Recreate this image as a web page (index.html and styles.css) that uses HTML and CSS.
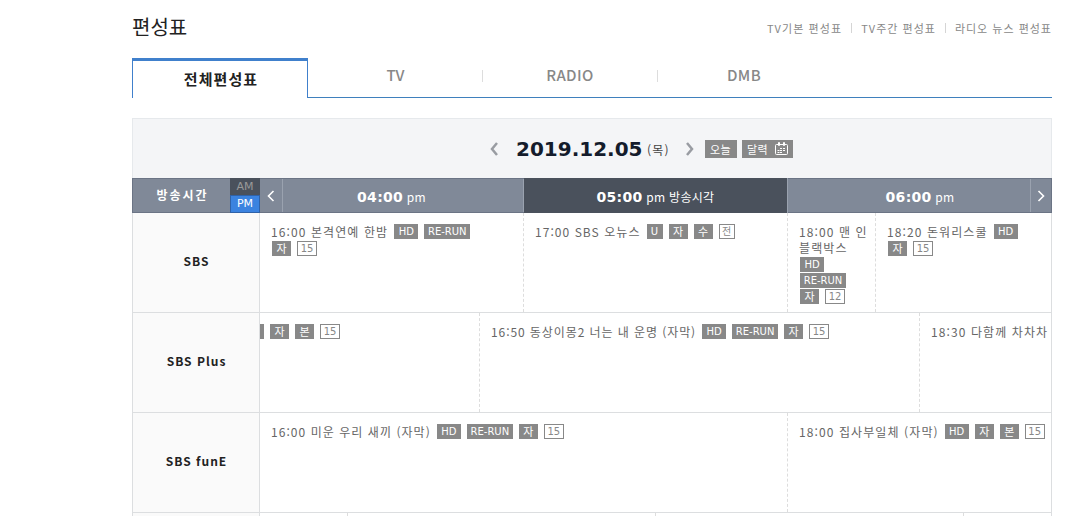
FILE: index.html
```html
<!DOCTYPE html>
<html lang="ko">

<head>
    <meta charset="UTF-8">
    <meta name="viewport" content="width=device-width, initial-scale=1.0">
    <title>편성표</title>
    <link rel="stylesheet" href="styles.css">
</head>

<body>
    <div id="container">
        <div class="head">
            <h2>편성표</h2>
            <ul class="link">
                <li><a>TV기본 편성표</a></li>
                <li><a>TV주간 편성표</a></li>
                <li><a>라디오 뉴스 편성표</a></li>
            </ul>
        </div>

        <ul class="tab">
            <li class="on">전체편성표</li>
            <li>TV</li>
            <li>RADIO</li>
            <li>DMB</li>
        </ul>

        <div class="day">
            <svg class="prev" width="8" height="14" viewBox="0 0 8 14"><path d="M7 1L2 7l5 6" /></svg>
            <strong>2019.12.05</strong>
            <span class="week">(목)</span>
            <svg class="next" width="8" height="14" viewBox="0 0 8 14"><path d="M1 1l5 6-5 6" /></svg>
            <a class="btn today">오늘</a>
            <a class="btn cal">달력
                <svg width="13" height="13" viewBox="0 0 13 13">
                    <path d="M3 2.5H1.5a1 1 0 0 0-1 1v8a1 1 0 0 0 1 1h10a1 1 0 0 0 1-1v-8a1 1 0 0 0-1-1H10M5 2.5h3M3.5 .5h1v3h-1zM8.5 .5h1v3h-1z" />
                    <path d="M5 6.5h2M8 6.5h2M2.5 8.5h2M5 8.5h2M8 8.5h2M2.5 10.5h2M5 10.5h2" />
                </svg>
            </a>
        </div>

        <div class="time">
            <div class="label">방송시간</div>
            <div class="ampm"><span>AM</span><span class="on">PM</span></div>
            <div class="arrow"><svg width="8" height="12" viewBox="0 0 8 12"><path d="M6.5 1L1.5 6l5 5" /></svg></div>
            <div class="hour first"><b>04:00</b> pm</div>
            <div class="hour now"><b>05:00</b> pm 방송시각</div>
            <div class="hour last"><b>06:00</b> pm</div>
            <div class="arrow right"><svg width="8" height="12" viewBox="0 0 8 12"><path d="M1.5 1l5 5-5 5" /></svg></div>
        </div>

        <div class="row">
            <div class="name">SBS</div>
            <div class="list">
                <div class="item m60">
                    <div class="line"><span>16:00 본격연예 한밤</span><i class="hd">HD</i><i class="re">RE-RUN</i></div>
                    <div class="line tags"><i>자</i><i class="age">15</i></div>
                </div>
                <div class="item m60">
                    <div class="line"><span class="mid">17:00 SBS 오뉴스</span><i class="u">U</i><i>자</i><i>수</i><i class="age all">전</i></div>
                </div>
                <div class="item m20">
                    <div class="line two"><span>18:00 맨 인<br>블랙박스</span></div>
                    <div class="line tags"><i class="hd">HD</i></div>
                    <div class="line"><i class="re">RE-RUN</i></div>
                    <div class="line"><i>자</i><i class="age">12</i></div>
                </div>
                <div class="item m40">
                    <div class="line"><span>18:20 돈워리스쿨</span><i class="hd">HD</i></div>
                    <div class="line tags"><i>자</i><i class="age">15</i></div>
                </div>
            </div>
        </div>

        <div class="row">
            <div class="name">SBS Plus</div>
            <div class="list">
                <div class="item m50 cut">
                    <div class="line"><i class="re"></i><i>자</i><i>본</i><i class="age">15</i></div>
                </div>
                <div class="item m100">
                    <div class="line"><span class="tight">16:50 동상이몽2 너는 내 운명 (자막)</span><i class="hd">HD</i><i class="re">RE-RUN</i><i>자</i><i class="age">15</i></div>
                </div>
                <div class="item m60">
                    <div class="line"><span>18:30 다함께 차차차</span></div>
                </div>
            </div>
        </div>

        <div class="row">
            <div class="name">SBS funE</div>
            <div class="list">
                <div class="item m120">
                    <div class="line"><span class="mid">16:00 미운 우리 새끼 (자막)</span><i class="hd">HD</i><i class="re">RE-RUN</i><i>자</i><i class="age">15</i></div>
                </div>
                <div class="item m60">
                    <div class="line"><span>18:00 집사부일체 (자막)</span><i class="hd">HD</i><i>자</i><i>본</i><i class="age">15</i></div>
                </div>
            </div>
        </div>

        <div class="row end">
            <div class="name"></div>
            <div class="list">
                <div class="item m20"></div>
                <div class="item m70"></div>
                <div class="item m70"></div>
                <div class="item m60"></div>
            </div>
        </div>
    </div>
</body>

</html>
```

FILE: styles.css
```css
* {
    margin: 0;
    padding: 0;
    box-sizing: border-box;
}

body {
    background: #fff;
    color: #666;
    font: 12px/16px "Noto Sans CJK KR", sans-serif;
}

ul {
    list-style: none;
}

i {
    font-style: normal;
}

svg {
    fill: none;
    stroke: #fff;
    flex: none;
}

#container {
    width: 920px;
    margin-left: 132px;
}

.head {
    display: flex;
    justify-content: space-between;
    height: 58px;
    padding-top: 13px;
}

.head h2 {
    color: #222;
    font-size: 20px;
    font-weight: 400;
    line-height: 28px;
}

.link {
    display: flex;
    padding-top: 6px;
    color: #888;
    font-size: 11px;
    letter-spacing: 1px;
}

.link li {
    display: flex;
    align-items: center;
    height: 17px;
}

.link li + li::before {
    content: "";
    width: 1px;
    height: 10px;
    margin: 0 9px;
    background: #d5d5d5;
}

.link li:first-child {
    letter-spacing: 1.1px;
}

/* tab */
.tab {
    display: flex;
    height: 40px;
    color: #888;
    font-size: 15px;
    font-weight: 500;
    line-height: 36px;
    text-align: center;
}

.tab li {
    flex: 1;
    display: flex;
    align-items: center;
    height: 40px;
    padding-bottom: 5px;
    justify-content: center;
    border-bottom: 1px solid #3f80bd;
    position: relative;
}

.tab .on {
    flex: none;
    width: 176px;
    padding: 0 0 2px 2px;
    border: 1px solid #4080cc;
    border-top-width: 3px;
    border-bottom: 0;
    color: #222;
    font-weight: 700;
    letter-spacing: 1.1px;
}

.tab li:nth-child(2),
.tab li:nth-child(3) {
    flex: none;
    width: 175px;
}

.tab li:nth-child(3) {
    padding-right: 1px;
    letter-spacing: 0.4px;
}

.tab li:nth-child(2)::after,
.tab li:nth-child(3)::after {
    content: "";
    position: absolute;
    right: 0;
    top: 12px;
    width: 1px;
    height: 12px;
    background: #ddd;
}

.tab li:last-child {
    padding-right: 222px;
    letter-spacing: 0.4px;
}

/* day */
.day {
    display: flex;
    align-items: center;
    height: 60px;
    margin-top: 20px;
    padding-left: 357px;
    border: 1px solid #e6e9ec;
    border-bottom: 0;
    background: #f4f5f7;
    color: #444;
}

.day .prev,
.day .next {
    stroke: #999ca2;
    stroke-width: 2.5;
}

.day strong {
    width: 127px;
    margin-left: 18px;
    color: #141c2c;
    font: bold 20px/26px "DejaVu Sans", sans-serif;
}

.day .week {
    width: 38px;
    margin: 2px 0 0 4px;
    letter-spacing: 1.2px;
}

.day .next {
    margin-left: 1px;
}

.day .btn {
    display: flex;
    justify-content: space-between;
    align-items: center;
    height: 18px;
    margin-left: 5px;
    padding: 0 5px;
    background: #888;
    color: #fff;
    font-size: 11px;
    letter-spacing: 0.5px;
    white-space: nowrap;
}

.day .today {
    width: 32px;
    margin-left: 11px;
}

.day .cal {
    width: 51px;
}

/* time */
.time {
    display: flex;
    height: 35px;
    border: 1px solid #6b7485;
    background: #808998;
    color: #fff;
    line-height: 33px;
}

.time .label {
    flex: none;
    width: 97px;
    padding-left: 2px;
    font-weight: 700;
    line-height: 31px;
    letter-spacing: 2px;
    text-align: center;
}

.ampm {
    flex: none;
    width: 30px;
    margin: -1px 0;
    background: #4a515c;
    font: 11px/18px "DejaVu Sans", sans-serif;
    text-align: center;
}

.ampm span {
    display: block;
    height: 17px;
    color: #999;
}

.ampm .on {
    height: 18px;
    border: 1px solid #2f62a8;
    background: #3b83e0;
    color: #fff;
    line-height: 16px;
}

.arrow {
    flex: none;
    display: flex;
    justify-content: center;
    align-items: center;
    width: 23px;
    border-right: 1px solid #9aa2af;
}

.arrow svg {
    stroke-width: 1.6;
}

.arrow.right {
    width: 21px;
    border: 0;
    border-left: 1px solid #9aa2af;
}

.hour {
    flex: none;
    width: 241px;
    border-right: 1px solid #9aa2af;
    font-size: 12px;
    text-align: center;
    letter-spacing: 0.3px;
    padding-top: 1px;
    white-space: nowrap;
}

.hour b {
    font: bold 14px/30px "DejaVu Sans", sans-serif;
    letter-spacing: 0.3px;
}

.hour.first {
    padding-right: 23px;
}

.hour.now {
    width: 264px;
    margin: -1px 0;
    padding-top: 2px;
    background: #4a515c;
}

.hour.last {
    width: 242px;
    padding-left: 22px;
    border: 0;
}

/* list */
.row {
    display: flex;
    height: 100px;
    border: 1px solid #dcdee0;
    border-top: 0;
}

.row.end {
    height: 3px;
    border-bottom: 0;
}

.name {
    flex: none;
    width: 127px;
    padding-left: 1px;
    border-right: 1px solid #dcdee0;
    background: #fafafa;
    color: #222;
    font-weight: 700;
    line-height: 95px;
    letter-spacing: 1px;
    text-align: center;
}

.list {
    display: flex;
    width: 791px;
    overflow: hidden;
}

.item {
    flex: none;
    padding: 11px 0 0 11px;
    border-right: 1px dashed #ddd;
}

.end .item {
    padding: 0;
}

.m20 { width: 88px; }
.m40 { width: 176px; }
.m50 { width: 220px; }
.m60 { width: 264px; }
.m70 { width: 308px; }
.m100 { width: 440px; }
.m120 { width: 528px; }

.cut .line {
    margin-left: -54px;
}

.line {
    display: flex;
    gap: 6px;
    height: 16px;
    white-space: nowrap;
}

.line.two {
    height: 32px;
}

.line span {
    letter-spacing: 1.1px;
}

.line .mid {
    letter-spacing: 1.05px;
}

.line .tight {
    letter-spacing: 0.92px;
}

.line i {
    flex: none;
    width: 19px;
    height: 15px;
    background: #888;
    color: #fff;
    font-size: 11px;
    line-height: 15px;
    text-align: center;
}

.line i:first-child {
    margin-left: 1px;
}

.line.tags {
    margin-top: 1px;
}

.line .hd,
.line .re,
.line .u,
.line .age {
    font-family: "DejaVu Sans", "Noto Sans CJK KR", sans-serif;
    font-size: 10px;
}

.line .hd {
    width: 24px;
}

.line .re {
    width: 46px;
}

.line .u {
    width: 16px;
}

.line .age {
    width: 20px;
    border: 1px solid #888;
    background: #fff;
    color: #888;
    line-height: 13px;
}

.line .all {
    width: 16px;
}
```
